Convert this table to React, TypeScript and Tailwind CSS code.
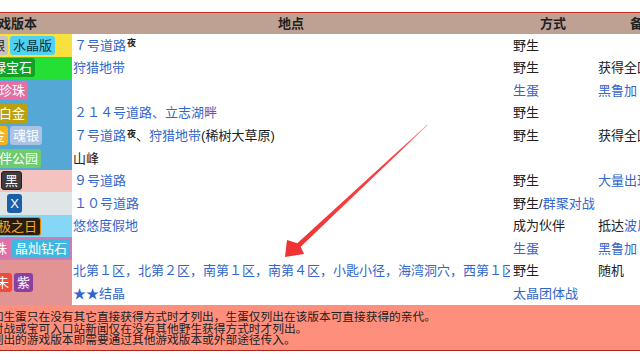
import React from "react";

type Badge = { t: string; bg: string; fg?: string; border?: string };

const link = "text-[#3366cc]";

function Badges({ items, pr }: { items: Badge[]; pr: string }) {
  return (
    <div className={`flex h-full items-center justify-end gap-[2px] overflow-hidden whitespace-nowrap ${pr}`}>
      {items.map((b) => (
        <span
          key={b.t}
          className="flex h-[19px] shrink-0 items-center rounded-[3px] px-[3px] text-[13px] leading-none"
          style={{ background: b.bg, color: b.fg ?? "#fff", border: b.border ? `1px solid ${b.border}` : undefined }}
        >
          {b.t}
        </span>
      ))}
    </div>
  );
}

function Night() {
  return <sup className="relative -top-[2px] ml-[1px] text-[9px] font-bold text-[#202122]">夜</sup>;
}

const loc = "flex items-center overflow-hidden whitespace-nowrap pl-[1px] text-[13px]";
const way = "flex items-center overflow-hidden whitespace-nowrap pl-[3px] text-[13px]";
const note = "flex items-center overflow-hidden whitespace-nowrap pl-[2px] text-[13px]";

export default function App() {
  return (
    <div className="relative h-[360px] w-[640px] overflow-hidden bg-white font-['Liberation_Sans','Noto_Sans_CJK_SC',sans-serif] text-[#202122]">
      <div className="h-[12px]" />
      <div className="grid grid-cols-[72px_438px_86px_94px] border-t border-[#c8301e]">
        <div className="flex h-[21px] items-center justify-end overflow-hidden whitespace-nowrap bg-[#bfa193] pr-[35px] text-[13px] font-bold">
          游戏版本
        </div>
        <div className="flex h-[21px] items-center justify-center bg-[#bfa193] text-[13px] font-bold">地点</div>
        <div className="flex h-[21px] items-center justify-center bg-[#bfa193] text-[13px] font-bold">方式</div>
        <div className="flex h-[21px] items-center justify-center bg-[#bfa193] text-[13px] font-bold">备注</div>
      </div>

      <div className="grid grid-cols-[72px_438px_86px_94px] grid-rows-[repeat(12,22.6px)]">
        {/* 1 */}
        <div className="bg-[#f8e03e]">
          <Badges pr="pr-[17px]" items={[{ t: "金", bg: "#e0b000" }, { t: "银", bg: "#c4c4c4", fg: "#202122" }, { t: "水晶版", bg: "#4fd2f2", fg: "#10303c" }]} />
        </div>
        <div className={loc}>
          <span className={`${link} pl-[1px]`}>７号道路</span>
          <Night />
        </div>
        <div className={way}>野生</div>
        <div className={note} />

        {/* 2 */}
        <div className="bg-[#24df34]">
          <Badges pr="pr-[37px]" items={[{ t: "蓝宝石", bg: "#2050c0" }, { t: "绿宝石", bg: "#12a028" }]} />
        </div>
        <div className={loc}>
          <span className={link}>狩猎地带</span>
        </div>
        <div className={way}>野生</div>
        <div className={note}>获得全国图鉴后</div>

        {/* 3-6 */}
        <div className="row-span-4 grid grid-rows-[repeat(4,22.6px)] bg-[#55a8d6]">
          <Badges pr="pr-[44px]" items={[{ t: "钻石", bg: "#4070d0" }, { t: "珍珠", bg: "#e36fa3" }]} />
          <Badges pr="pr-[44px]" items={[{ t: "白金", bg: "#bba10a" }]} />
          <Badges pr="pr-[30px]" items={[{ t: "心金", bg: "#f2b31c" }, { t: "魂银", bg: "#a9c3e4" }]} />
          <Badges pr="pr-[31px]" items={[{ t: "伙伴公园", bg: "#6fcb6f" }]} />
        </div>
        <div className={loc} />
        <div className={`${way} ${link}`}>生蛋</div>
        <div className={`${note} ${link}`}>黑鲁加</div>

        <div className={loc}>
          <span className={`${link} pl-[1px]`}>２１４号道路、立志湖畔</span>
        </div>
        <div className={way}>野生</div>
        <div className={note} />

        <div className={loc}>
          <span className={`${link} pl-[1px]`}>７号道路</span>
          <Night />
          <span>、</span>
          <span className={link}>狩猎地带</span>
          <span>(稀树大草原)</span>
        </div>
        <div className={way}>野生</div>
        <div className={note}>获得全国图鉴后</div>

        <div className={loc}>山峰</div>
        <div className={way} />
        <div className={note} />

        {/* 7 */}
        <div className="bg-[#f4c3c0]">
          <Badges pr="pr-[50px]" items={[{ t: "黑", bg: "#3d3d3d", border: "#222" }]} />
        </div>
        <div className={loc}>
          <span className={`${link} pl-[1px]`}>９号道路</span>
        </div>
        <div className={way}>野生</div>
        <div className={`${note} ${link}`}>大量出现</div>

        {/* 8 */}
        <div className="bg-[#dfe5e6]">
          <Badges pr="pr-[50px]" items={[{ t: "X", bg: "#1a5fa8" }]} />
        </div>
        <div className={loc}>
          <span className={`${link} pl-[1px]`}>１０号道路</span>
        </div>
        <div className={way}>
          野生/<span className={link}>群聚对战</span>
        </div>
        <div className={note} />

        {/* 9 */}
        <div className="bg-[#86d6f6]">
          <Badges pr="pr-[31px]" items={[{ t: "究极之日", bg: "#2b1d0e", fg: "#f5a623", border: "#e08a00" }]} />
        </div>
        <div className={loc}>
          <span className={link}>悠悠度假地</span>
        </div>
        <div className={way}>成为伙伴</div>
        <div className={note}>
          抵达<span className={link}>波尼大峡谷</span>
        </div>

        {/* 10 */}
        <div className="bg-[#c97dba]">
          <Badges pr="pr-[2px]" items={[{ t: "明亮珍珠", bg: "#e36fa3" }, { t: "晶灿钻石", bg: "#3fb8e0" }]} />
        </div>
        <div className={loc} />
        <div className={`${way} ${link}`}>生蛋</div>
        <div className={`${note} ${link}`}>黑鲁加</div>

        {/* 11-12 */}
        <div className="row-span-2 bg-[#e29393]">
          <Badges pr="pr-[39px]" items={[{ t: "朱", bg: "#f04a3c" }, { t: "紫", bg: "#8c3fa0" }]} />
        </div>
        <div className={`${loc} ${link}`}>
          北第１区，北第２区，南第１区，南第４区，小匙小径，海湾洞穴，西第１区
        </div>
        <div className={way}>野生</div>
        <div className={note}>随机</div>

        <div className={`${loc} ${link}`}>★★结晶</div>
        <div className={`${way} ${link}`}>太晶团体战</div>
        <div className={note} />
      </div>

      <div className="h-[46px] overflow-hidden whitespace-nowrap border-b border-[#a8281a] bg-[#ff8f7d] pt-[6px] text-[11.7px] leading-[11.6px]">
        <div className="-ml-[20px]">
          <div>例如生蛋只在没有其它直接获得方式时才列出，生蛋仅列出在该版本可直接获得的亲代。</div>
          <div>而对战或宝可入口站新闻仅在没有其他野生获得方式时才列出。</div>
          <div>未列出的游戏版本即需要通过其他游戏版本或外部途径传入。</div>
        </div>
      </div>

      <svg className="pointer-events-none absolute left-0 top-0" width="640" height="360" viewBox="0 0 640 360">
        <defs>
          <linearGradient id="arr" x1="428" y1="124" x2="285" y2="257" gradientUnits="userSpaceOnUse">
            <stop offset="0" stopColor="#ffb0b0" />
            <stop offset="0.2" stopColor="#f44848" />
            <stop offset="1" stopColor="#f03232" />
          </linearGradient>
        </defs>
        <polygon
          points="285,257 304,254 300.7,246.8 427.6,125.2 427.2,124.6 297.3,243.2 287,240"
          fill="url(#arr)"
        />
      </svg>
    </div>
  );
}
